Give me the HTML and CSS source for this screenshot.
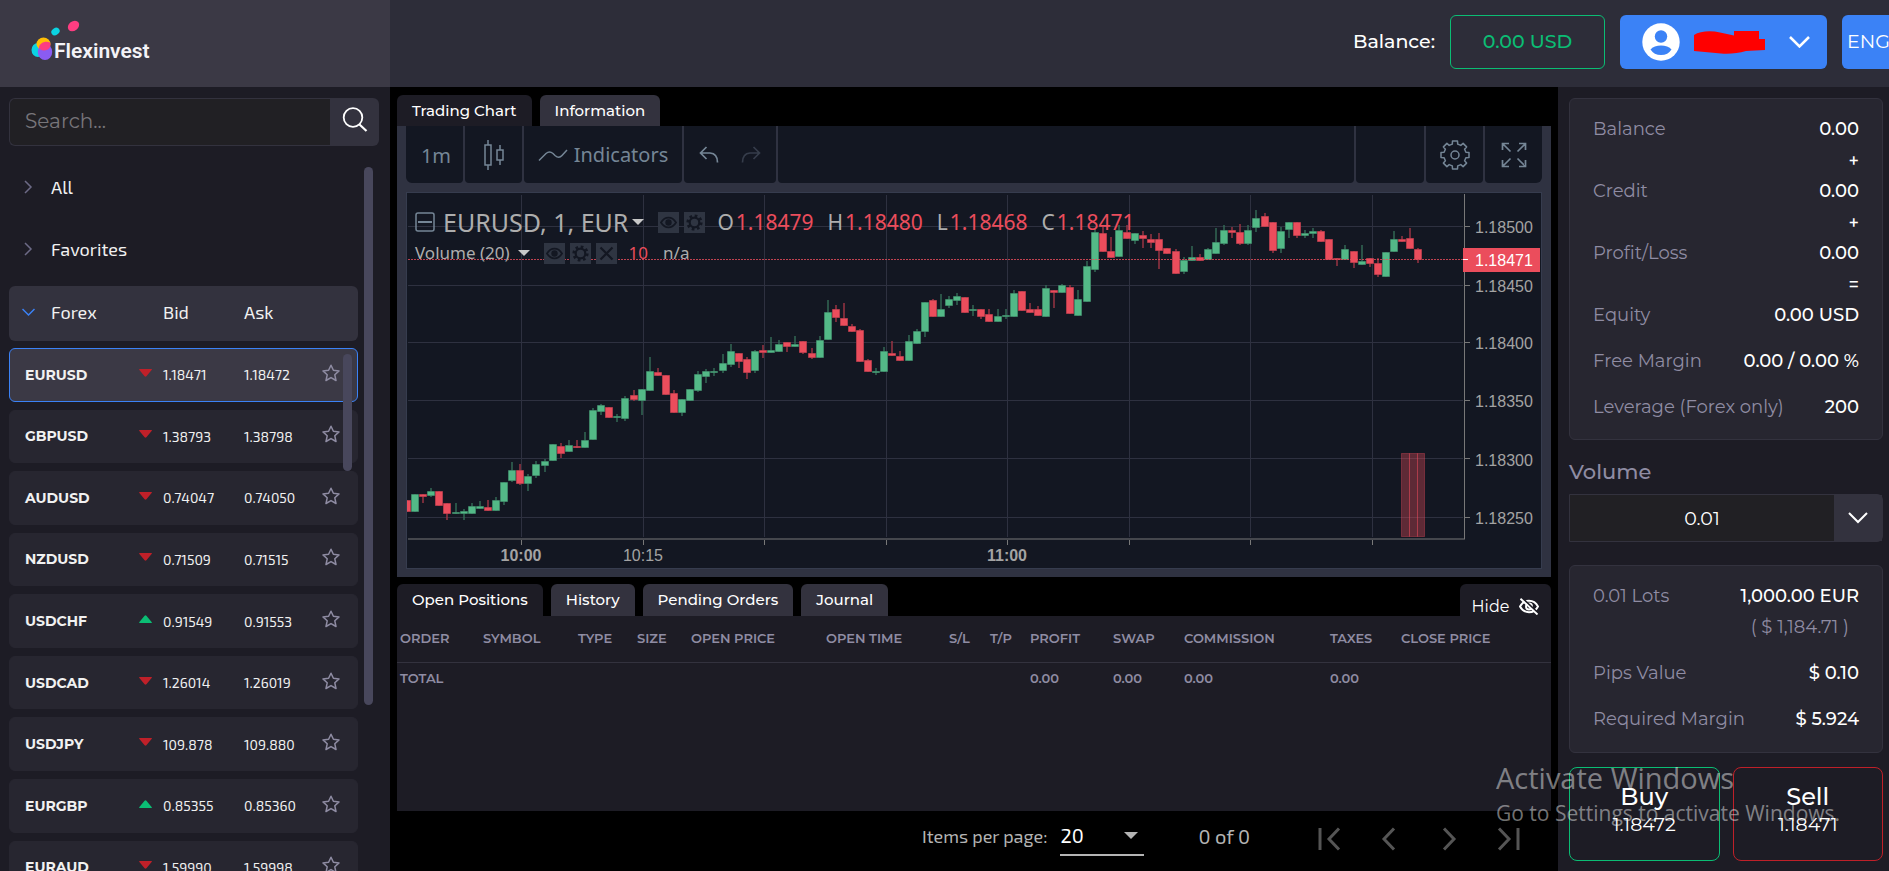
FILE: index.html
```html
<!DOCTYPE html>
<html lang="en">
<head>
<meta charset="utf-8">
<meta name="viewport" content="width=device-width, initial-scale=1">
<title>Flexinvest</title>
<link rel="stylesheet" href="styles.css">
</head>
<body>
<svg class="sprite" aria-hidden="true">
  <symbol id="star" viewBox="0 0 18 18"><path d="M9 1.200l2.400 5 5.600.700-4.200 3.900 1.200 5.700L9 13.600l-5 2.900 1.200-5.700L1 6.900l5.600-.700z" fill="none" stroke="currentColor" stroke-width="1.500" stroke-linejoin="round"/></symbol>
  <symbol id="down" viewBox="0 0 13 8"><path d="M.4 0h12.200q.6.4 0 1L7.400 7.300q-.9.700-1.800 0L.4 1q-.5-.6 0-1z" fill="#bf2029"/></symbol>
  <symbol id="up" viewBox="0 0 13 8"><path d="M.4 8h12.200q.6-.4 0-1L7.400.700q-.9-.700-1.800 0L.4 7q-.5.6 0 1z" fill="#0bbd74"/></symbol>
  <symbol id="eye" viewBox="0 0 21 21"><path d="M3 10.500C7 4 14 4 18 10.500C14 17 7 17 3 10.500z" fill="none" stroke="currentColor" stroke-width="1.800"/><circle cx="10.500" cy="10.500" r="3.200" fill="currentColor"/></symbol>
  <symbol id="cog" viewBox="0 0 21 21"><circle cx="10.500" cy="10.500" r="4.800" fill="none" stroke="currentColor" stroke-width="2.200"/><circle cx="10.500" cy="10.500" r="6.800" fill="none" stroke="currentColor" stroke-width="2.600" stroke-dasharray="2.670 2.670"/></symbol>
  <symbol id="cross" viewBox="0 0 21 21"><path d="M4.500 4.500l12 12M16.500 4.500l-12 12" stroke="currentColor" stroke-width="2.200"/></symbol>
</svg>

<div class="app">
  <header class="header">
    <a class="brand" href="#" aria-label="Flexinvest">
      <svg width="120" height="44" viewBox="30 18 120 44">
        <ellipse cx="38" cy="50" rx="6.500" ry="7" fill="#0bd3e2"/>
        <ellipse cx="43.500" cy="44" rx="7" ry="6.500" fill="#ffbe05"/>
        <ellipse cx="45" cy="52" rx="7.200" ry="8" fill="#8a5cf2"/>
        <path d="M39 47c1-4 6-6.500 11-4.500 1.500 4-1 8-6 8-3 0-4.500-1.500-5-3.500z" fill="#fd3d81"/>
        <ellipse cx="55.500" cy="31.500" rx="4.400" ry="3.500" transform="rotate(-35 55.500 31.500)" fill="#0bd3e2"/>
        <ellipse cx="73.500" cy="26" rx="6.200" ry="4.700" transform="rotate(-38 73.500 26)" fill="#fd3d81"/>
        <text x="54" y="58" class="brand-name">Flexinvest</text>
      </svg>
    </a>
    <div class="topbar">
      <span class="topbar-label">Balance:</span>
      <button class="balance-btn">0.00 USD</button>
      <button class="user-btn" aria-label="Account">
        <svg width="38" height="38" viewBox="0 0 38 38"><circle cx="19" cy="19" r="18.700" fill="#fff"/><circle cx="19" cy="13.500" r="6.200" fill="#3b82f6"/><path d="M8.500 26.500c4-5.500 17-5.500 21 0q-3.500 5.500-10.500 5.500t-10.500-5.500z" fill="#3b82f6"/></svg>
        <svg class="user-mask" width="71" height="23" viewBox="0 0 71 23"><path d="M0 4C6 0 17-.5 26 1.500l14 3V0h25v8h6v11l-19 1c-8 2.500-17 3-25 2.500L0 20z" fill="#f00"/></svg>
        <svg class="user-chevron" width="21" height="12" viewBox="0 0 21 12"><path d="M1 1l9.500 9.500L20 1" fill="none" stroke="#fff" stroke-width="2.500"/></svg>
      </button>
      <button class="lang-btn">ENG</button>
    </div>
  </header>

  <aside class="watchlist">
    <form class="search">
      <input class="search-input" type="text" placeholder="Search..." aria-label="Search">
      <button class="search-btn" type="button" aria-label="Search">
        <svg width="26" height="26" viewBox="0 0 26 26"><circle cx="11" cy="10.500" r="9.300" fill="none" stroke="#fff" stroke-width="1.800"/><path d="M17.500 17.500l7 6.500" stroke="#fff" stroke-width="2.200"/></svg>
      </button>
    </form>
    <div class="groups">
      <button class="group"><svg width="13" height="14" viewBox="0 0 13 14"><path d="M3 1l6 6-6 6" fill="none" stroke="#6c6a86" stroke-width="1.500"/></svg>All</button>
      <button class="group"><svg width="13" height="14" viewBox="0 0 13 14"><path d="M3 1l6 6-6 6" fill="none" stroke="#6c6a86" stroke-width="1.500"/></svg>Favorites</button>
      <div class="group-head">
        <button class="group-title"><svg width="13" height="14" viewBox="0 0 13 14"><path d="M.5 4l6 6 6-6" fill="none" stroke="#3b82f6" stroke-width="1.500"/></svg>Forex</button>
        <span>Bid</span><span>Ask</span>
      </div>
      <ul class="pairs">
        <li class="pair pair-active"><b>EURUSD</b><svg width="13" height="8"><use href="#down"/></svg><span>1.18471</span><span>1.18472</span><button class="fav" aria-label="Add EURUSD to favorites"><svg width="18" height="18"><use href="#star"/></svg></button></li>
        <li class="pair"><b>GBPUSD</b><svg width="13" height="8"><use href="#down"/></svg><span>1.38793</span><span>1.38798</span><button class="fav" aria-label="Add GBPUSD to favorites"><svg width="18" height="18"><use href="#star"/></svg></button></li>
        <li class="pair"><b>AUDUSD</b><svg width="13" height="8"><use href="#down"/></svg><span>0.74047</span><span>0.74050</span><button class="fav" aria-label="Add AUDUSD to favorites"><svg width="18" height="18"><use href="#star"/></svg></button></li>
        <li class="pair"><b>NZDUSD</b><svg width="13" height="8"><use href="#down"/></svg><span>0.71509</span><span>0.71515</span><button class="fav" aria-label="Add NZDUSD to favorites"><svg width="18" height="18"><use href="#star"/></svg></button></li>
        <li class="pair"><b>USDCHF</b><svg width="13" height="8"><use href="#up"/></svg><span>0.91549</span><span>0.91553</span><button class="fav" aria-label="Add USDCHF to favorites"><svg width="18" height="18"><use href="#star"/></svg></button></li>
        <li class="pair"><b>USDCAD</b><svg width="13" height="8"><use href="#down"/></svg><span>1.26014</span><span>1.26019</span><button class="fav" aria-label="Add USDCAD to favorites"><svg width="18" height="18"><use href="#star"/></svg></button></li>
        <li class="pair"><b>USDJPY</b><svg width="13" height="8"><use href="#down"/></svg><span>109.878</span><span>109.880</span><button class="fav" aria-label="Add USDJPY to favorites"><svg width="18" height="18"><use href="#star"/></svg></button></li>
        <li class="pair"><b>EURGBP</b><svg width="13" height="8"><use href="#up"/></svg><span>0.85355</span><span>0.85360</span><button class="fav" aria-label="Add EURGBP to favorites"><svg width="18" height="18"><use href="#star"/></svg></button></li>
        <li class="pair"><b>EURAUD</b><svg width="13" height="8"><use href="#down"/></svg><span>1.59990</span><span>1.59998</span><button class="fav" aria-label="Add EURAUD to favorites"><svg width="18" height="18"><use href="#star"/></svg></button></li>
      </ul>
      <i class="thumb thumb-inner"></i>
      <i class="thumb thumb-outer"></i>
    </div>
  </aside>

  <main class="center">
    <nav class="tabs">
      <button class="tab tab-active">Trading Chart</button>
      <button class="tab">Information</button>
    </nav>
    <section class="chart">
      <div class="toolbar">
        <button class="tool tool-period">1m</button>
        <button class="tool tool-icon" aria-label="Bar style"><svg width="20" height="30" viewBox="0 0 20 30" fill="none" stroke="currentColor" stroke-width="1.500"><path d="M1 5h6v20H1zM4 0v5M4 25v5M13 10h6v10h-6zM16 5v5M16 20v5"/></svg></button>
        <button class="tool tool-indicators"><svg width="30" height="14" viewBox="0 0 30 14" fill="none" stroke="currentColor" stroke-width="1.500"><path d="M1 12.500l7-7q3.500-3 7 0l2 2q4 3.500 7 0l5-5.500"/></svg>Indicators</button>
        <div class="tool tool-history">
          <button class="plain" aria-label="Undo"><svg width="20" height="18" viewBox="0 0 20 18" fill="none" stroke="currentColor" stroke-width="1.700"><path d="M7.500 1L1.500 7l6 6M1.500 7H11q7.500.5 7.500 9.500"/></svg></button>
          <button class="plain dim" aria-label="Redo"><svg width="20" height="18" viewBox="0 0 20 18" fill="none" stroke="currentColor" stroke-width="1.700"><path d="M12.500 1l6 6-6 6M18.500 7H9Q1.500 7.500 1.500 16.500"/></svg></button>
        </div>
        <div class="tool tool-fill"></div>
        <div class="tool tool-gap"></div>
        <button class="tool tool-icon" aria-label="Settings"><svg width="30" height="30" viewBox="0 0 30 30" fill="none" stroke="currentColor" stroke-width="1.500" stroke-linejoin="round"><path id="gear" d=""/><circle cx="15" cy="15" r="4"/></svg></button>
        <button class="tool tool-icon tool-last" aria-label="Fullscreen"><svg width="26" height="26" viewBox="0 0 26 26" fill="none" stroke="currentColor" stroke-width="1.700"><path d="M1.500 8V1.500H8M1.500 1.500L9.500 9.500M18 1.500h6.500V8M24.500 1.500l-8 8M1.500 18v6.500H8M1.500 24.500l8-8M18 24.500h6.500V18M24.500 24.500l-8-8"/></svg></button>
      </div>
      <div class="pane">
        <svg class="plot" id="plot" viewBox="0 0 1134 375" role="img" aria-label="EURUSD one minute chart">
          <path class="grid" d="M1 33.500h1055M1 92.500h1055M1 149.500h1055M1 207.500h1055M1 265.500h1055M1 324.500h1055M114.500 2v342M236.500 2v342M357.500 2v342M479.500 2v342M600.500 2v342M722.500 2v342M843.500 2v342M965.500 2v342"/>
          <g id="candles"></g>
          <g class="volume"><rect x="994.500" y="260.500" width="8" height="83"/><rect x="1002.500" y="260.500" width="8" height="83"/><rect x="1010.500" y="260.500" width="7" height="83"/></g>
          <path class="last" d="M1 66.500h1056"/>
          <path class="axis" d="M1057.500 1v345M1 346h1057M1058 33.500h5M1058 92.500h5M1058 149.500h5M1058 207.500h5M1058 265.500h5M1058 324.500h5M114.500 347v5M236.500 347v5M357.500 347v5M479.500 347v5M600.500 347v5M722.500 347v5M843.500 347v5M965.500 347v5"/>
          <rect x="1056" y="55" width="77" height="24" fill="#eb4d5c"/><path d="M1056 66.500h5" stroke="#fff"/>
          <g class="prices"><text x="1068" y="40">1.18500</text><text x="1068" y="99">1.18450</text><text x="1068" y="156">1.18400</text><text x="1068" y="214">1.18350</text><text x="1068" y="273">1.18300</text><text x="1068" y="331">1.18250</text><text x="1068" y="73" class="now">1.18471</text></g>
          <g class="times"><text x="114" y="368" class="strong">10:00</text><text x="236" y="368">10:15</text><text x="600" y="368" class="strong">11:00</text></g>
        </svg>
        <div class="legend">
          <div class="legend-row">
            <svg width="20" height="20" viewBox="0 0 20 20" fill="none" stroke="#758696" stroke-width="1.500"><rect x="1" y="1" width="18" height="18" rx="2"/><path d="M3 10h14" stroke-width="2"/></svg>
            <span class="legend-title">EURUSD, 1, EUR</span><i class="caret"></i>
            <span class="chips"><button class="chip" aria-label="Hide"><svg><use href="#eye"/></svg></button><button class="chip" aria-label="Settings"><svg><use href="#cog"/></svg></button></span>
            <span class="ohlc">O<em>1.18479</em></span><span class="ohlc">H<em>1.18480</em></span><span class="ohlc">L<em>1.18468</em></span><span class="ohlc">C<em>1.18471</em></span>
          </div>
          <div class="legend-row legend-sub">
            <span>Volume (20)</span><i class="caret"></i>
            <span class="chips"><button class="chip" aria-label="Hide"><svg><use href="#eye"/></svg></button><button class="chip" aria-label="Settings"><svg><use href="#cog"/></svg></button><button class="chip" aria-label="Remove"><svg><use href="#cross"/></svg></button></span>
            <em>10</em><span class="na">n/a</span>
          </div>
        </div>
      </div>
    </section>

    <nav class="tabs tabs-lower">
      <button class="tab tab-active">Open Positions</button>
      <button class="tab">History</button>
      <button class="tab">Pending Orders</button>
      <button class="tab">Journal</button>
      <button class="hide-btn">Hide <svg width="20" height="17" viewBox="0 0 20 17" fill="none" stroke="#fff" stroke-width="1.900"><path d="M1 8.500C5 .8 15 .8 19 8.500C15 16.200 5 16.200 1 8.500z"/><circle cx="10" cy="8.500" r="3"/><path d="M3 0l16 15" stroke="#1d1c25" stroke-width="2"/><path d="M1.500.8l17 15.700"/></svg></button>
    </nav>
    <section class="positions">
      <table>
        <thead><tr><th>ORDER</th><th>SYMBOL</th><th>TYPE</th><th>SIZE</th><th>OPEN PRICE</th><th>OPEN TIME</th><th>S/L</th><th>T/P</th><th>PROFIT</th><th>SWAP</th><th>COMMISSION</th><th>TAXES</th><th>CLOSE PRICE</th></tr></thead>
        <tbody><tr><td>TOTAL</td><td></td><td></td><td></td><td></td><td></td><td></td><td></td><td>0.00</td><td>0.00</td><td>0.00</td><td>0.00</td><td></td></tr></tbody>
      </table>
    </section>
    <footer class="pager">
      <label for="per-page">Items per page:</label>
      <span class="select-wrap"><select id="per-page"><option>20</option></select></span>
      <span class="range">0 of 0</span>
      <button class="page-btn" aria-label="First page"><svg viewBox="0 0 24 24"><path d="M3 1v22M22 1.500L12 12l10 10.500"/></svg></button>
      <button class="page-btn" aria-label="Previous page"><svg viewBox="0 0 24 24"><path d="M17 1.500L7 12l10 10.500"/></svg></button>
      <button class="page-btn" aria-label="Next page"><svg viewBox="0 0 24 24"><path d="M7 1.500L17 12 7 22.500"/></svg></button>
      <button class="page-btn" aria-label="Last page"><svg viewBox="0 0 24 24"><path d="M2 1.500L12 12 2 22.500M21 1v22"/></svg></button>
    </footer>
  </main>

  <aside class="ticket">
    <dl class="card account">
      <div><dt>Balance</dt><dd>0.00</dd></div>
      <div class="sign"><dd>+</dd></div>
      <div><dt>Credit</dt><dd>0.00</dd></div>
      <div class="sign"><dd>+</dd></div>
      <div><dt>Profit/Loss</dt><dd>0.00</dd></div>
      <div class="sign"><dd>=</dd></div>
      <div><dt>Equity</dt><dd>0.00 USD</dd></div>
      <div class="wide"><dt>Free Margin</dt><dd>0.00 / 0.00 %</dd></div>
      <div class="wide"><dt>Leverage (Forex only)</dt><dd>200</dd></div>
    </dl>
    <label class="volume-label" for="volume">Volume</label>
    <div class="volume-box">
      <input id="volume" type="text" value="0.01">
      <button aria-label="Choose volume"><svg width="20" height="12" viewBox="0 0 20 12"><path d="M1 1l9 9 9-9" fill="none" stroke="#fff" stroke-width="2"/></svg></button>
    </div>
    <dl class="card lots">
      <div><dt>0.01 Lots</dt><dd>1,000.00 EUR</dd></div>
      <div class="sign"><dd class="muted">( $ 1,184.71 )</dd></div>
      <div class="wide"><dt>Pips Value</dt><dd>$ 0.10</dd></div>
      <div class="wide"><dt>Required Margin</dt><dd>$ 5.924</dd></div>
    </dl>
    <div class="actions">
      <button class="trade buy"><strong>Buy</strong><span>1.18472</span></button>
      <button class="trade sell"><strong>Sell</strong><span>1.18471</span></button>
    </div>
  </aside>

  <div class="activation"><p>Activate Windows</p><p class="small">Go to Settings to activate Windows.</p></div>
</div>
<script src="chart.js"></script>
</body>
</html>
```
FILE: styles.css
```css
:root {
  --sans: Montserrat, Inter, "Open Sans", sans-serif;
  --narrow: "Exo 2", Roboto, sans-serif;
  --chart: "Noto Sans", "Open Sans", sans-serif;
  --panel: #1d1c25;
  --raised: #33323e;
  --muted: #8f8ca3;
  --blue: #3b82f6;
}
* { box-sizing: border-box; }
body { margin: 0; background: #000; color: #fff; font-family: var(--sans); }
button { font: inherit; color: inherit; background: none; border: 0; padding: 0; cursor: pointer; }
em { font-style: normal; }
svg { display: block; flex: none; }
.sprite { position: absolute; width: 0; height: 0; }

.app {
  position: relative;
  display: grid;
  grid-template: 87px minmax(0, 1fr) / 390px minmax(0, 1fr) 331px;
  height: 100vh;
  overflow: hidden;
}

.header { grid-column: 1 / -1; display: flex; background: #2d2d39; overflow: hidden; }
.brand { width: 390px; flex: none; background: #3b3945; padding: 18px 30px; }
.brand-name { font: 600 21px Roboto, sans-serif; fill: #f4f3f7; }
.topbar { flex: 1; display: flex; justify-content: flex-end; align-items: flex-start; padding: 15px 0; gap: 15px; font-size: 19px; line-height: 54px; font-weight: 500; }
.topbar button { height: 54px; border-radius: 6px; flex: none; }
.balance-btn { width: 155px; border: 1px solid #0bbd74; color: #0bbd74; line-height: 52px; }
.user-btn { width: 207px; background: var(--blue); display: flex; align-items: center; padding: 0 17px 0 22px; }
.user-mask { margin-left: 14px; }
.user-chevron { margin-left: auto; }
.lang-btn { width: 60px; margin-right: -13px; padding: 0 5px; background: var(--blue); text-align: left; font-weight: 400; }

.watchlist { background: var(--panel); padding: 11px 11px 0 9px; min-height: 0; display: flex; flex-direction: column; }
.search { display: flex; height: 48px; flex: none; }
.search-input { flex: 1; min-width: 0; background: #212024; border: 1px solid var(--raised); border-right: 0; border-radius: 6px 0 0 6px; padding: 0 15px 2px; font: 20px var(--sans); color: #fff; }
.search-input::placeholder { color: #77757a; }
.search-btn { width: 49px; background: var(--raised); border-radius: 0 6px 6px 0; display: grid; place-items: center; padding-bottom: 4px; }
.groups { position: relative; padding: 11px 21px 0 0; font: 18px var(--narrow); color: #f1f1f1; }
.group { display: flex; align-items: center; gap: 16px; width: 100%; height: 62px; padding: 0 13px 2px; text-align: left; }
.group-head { display: grid; grid-template-columns: 141px 81px 1fr; align-items: center; height: 55px; margin: 5px 0 7px; padding: 0 13px 3px; background: var(--raised); border-radius: 6px; }
.group-title { display: flex; align-items: center; gap: 16px; }
.pairs { list-style: none; margin: 0; padding: 0; height: 546px; display: flex; flex-direction: column; gap: 8px; }
.pair { flex: 1; display: grid; grid-template-columns: 114px 24px 81px 78px 18px; align-items: center; padding: 0 15px; border: 1px solid #272630; border-radius: 6px; background: #272630; font-size: 14px; }
.pair b { font: 700 14px var(--sans); }
.pair > svg { margin-bottom: 4px; }
.pair-active { background: #3b3945; border-color: var(--blue); }
.fav { color: #8f8ca3; padding-bottom: 4px; }
.thumb { position: absolute; width: 9px; border-radius: 5px; background: #48475c; }
.thumb-inner { top: 208px; right: 27px; height: 117px; }
.thumb-outer { top: 21px; right: 6px; height: 538px; }

.center { display: flex; flex-direction: column; min-width: 0; min-height: 0; padding: 8px 7px 0; background: #000; }
.tabs { display: flex; gap: 8px; height: 31px; font-size: 15px; font-weight: 500; }
.tab { padding: 0 15px; border-radius: 6px 6px 0 0; background: var(--raised); }
.tab-active { background: var(--panel); }
.chart { background: #2f3241; padding: 0 9px 8px; color: #758696; }
.toolbar { display: flex; gap: 2px; height: 57px; margin-bottom: 9px; }
.tool { display: flex; align-items: center; justify-content: center; background: #131722; border-radius: 0 0 4px 4px; font: 20px var(--chart); }
.tool-icon { width: 57px; }
.tool-period { width: 57px; padding: 2px 0 0 3px; border-bottom-left-radius: 6px; }
.tool-last { border-bottom-right-radius: 6px; }
.tool-indicators { width: 158px; gap: 6px; }
.tool-history { width: 92px; gap: 22px; }
.tool-fill { flex: 1; }
.tool-gap { width: 68px; }
.dim { color: #363d4b; }
.pane { position: relative; background: #131722; border: 1px solid #363c4e; }
.plot { width: 100%; height: auto; }
.grid { fill: none; stroke: #2e3140; }
.last { fill: none; stroke: #eb4d5c; stroke-dasharray: 2 1; opacity: .8; }
.axis { fill: none; stroke: #787878; stroke-width: 1; }
.volume rect { fill: #eb4d5c; fill-opacity: .35; stroke: #eb4d5c; stroke-opacity: .35; }
.prices, .times { font: 16px "Liberation Sans", Arial, sans-serif; fill: #a3a3a3; }
.times { text-anchor: middle; }
.now { fill: #fff; }
.strong { font-weight: 700; }
.up { fill: #53b987; stroke: #336854; }
.dn { fill: #eb4d5c; stroke: #9a3443; }
.legend { position: absolute; top: 11px; left: 8px; font: 21px/36px var(--chart); color: #adadad; white-space: nowrap; }
.legend em { color: #eb4d5c; }
.legend-row { display: flex; align-items: center; }
.legend-title { font-size: 25px; margin-left: 8px; }
.caret { width: 0; height: 0; margin-left: 4px; border: 6px solid transparent; border-top-color: #c8c8c8; border-bottom: 0; }
.chips { display: flex; gap: 5px; margin: 0 12px 0 14px; }
.chip { width: 21px; height: 21px; background: #2f3542; color: #131722; }
.chip svg { width: 21px; height: 21px; }
.ohlc { display: flex; gap: 2px; margin-right: 14px; }
.legend-sub { font-size: 17px; line-height: 26px; }
.legend-sub .caret { margin-left: 8px; }
.na { margin-left: 15px; }

.tabs-lower { margin-top: 7px; height: 32px; flex: none; }
.tabs-lower .tab { padding-bottom: 2px; }
.hide-btn { margin-left: auto; width: 91px; display: flex; align-items: center; justify-content: center; gap: 10px; padding-top: 12px; background: var(--panel); border-radius: 6px 6px 0 0; font-size: 16px; font-weight: 400; }
.positions { flex: 1; min-height: 0; background: var(--panel); }
.positions table { width: 100%; table-layout: fixed; border-collapse: collapse; color: var(--muted); font-size: 13px; text-align: left; white-space: nowrap; }
.positions th, .positions td { padding: 0 2px 0 3px; font-weight: 600; }
.positions th { height: 46px; padding-bottom: 2px; border-bottom: 1px solid var(--raised); }
.positions td { height: 32px; }
.positions th:nth-child(1), .positions th:nth-child(9) { width: 83px; }
.positions th:nth-child(2) { width: 95px; }
.positions th:nth-child(3) { width: 59px; }
.positions th:nth-child(4) { width: 54px; }
.positions th:nth-child(5) { width: 135px; }
.positions th:nth-child(6) { width: 123px; }
.positions th:nth-child(7) { width: 41px; }
.positions th:nth-child(8) { width: 40px; }
.positions th:nth-child(10), .positions th:nth-child(12) { width: 71px; }
.positions th:nth-child(11) { width: 146px; }
.pager { flex: none; height: 60px; display: flex; align-items: center; justify-content: flex-end; padding: 0 24px 10px 0; font: 18px var(--narrow); color: #b4b4b4; }
.select-wrap { position: relative; margin: 0 54px 0 13px; border-bottom: 2px solid #b4b4b4; }
.select-wrap::after { content: ""; position: absolute; right: 6px; top: 16px; border: 7px solid transparent; border-top-color: #b4b4b4; border-bottom: 0; pointer-events: none; }
.select-wrap select { appearance: none; width: 84px; height: 38px; border: 0; padding: 0; background: transparent; color: #fff; font: 20px var(--narrow); }
.range { margin-right: 49px; font-size: 20px; }
.page-btn { width: 60px; display: flex; justify-content: center; padding-top: 6px; }
.page-btn:last-child { margin-right: -12px; }
.page-btn svg { width: 24px; height: 24px; fill: none; stroke: #555; stroke-width: 3; }

.ticket { background: var(--panel); padding: 11px 6px 0 11px; display: flex; flex-direction: column; min-height: 0; }
.card { margin: 0; padding: 0 23px; background: #272630; border: 1px solid var(--raised); border-radius: 6px; font-size: 18px; }
.card div { display: flex; justify-content: space-between; align-items: center; height: 32px; }
.card .sign { height: 30px; justify-content: flex-end; }
.card .wide { height: 46px; }
.card dt { color: var(--muted); font-weight: 400; }
.card dd { margin: 0; font-weight: 500; }
.card .muted { color: var(--muted); font-weight: 400; margin-right: 10px; }
.account { padding-top: 14px; height: 342px; flex: none; }
.account .sign { padding-top: 2px; }
.account div:nth-child(7) { margin-bottom: 7px; }
.volume-label { margin: 18px 0 8px; font-size: 21px; line-height: 28px; font-weight: 500; color: var(--muted); }
.volume-box { display: flex; height: 48px; flex: none; border: 1px solid var(--raised); border-radius: 0 6px 6px 0; background: #212024; }
.volume-box input { flex: 1; min-width: 0; border: 0; background: none; color: #fff; text-align: center; font: 19px var(--sans); }
.volume-box button { width: 48px; background: var(--raised); display: grid; place-items: center; }
.lots { margin-top: 23px; padding-top: 14px; height: 188px; flex: none; }
.lots .sign { margin-bottom: 8px; }
.actions { display: flex; gap: 13px; margin-top: 14px; }
.trade { flex: 1; height: 94px; border: 1px solid; border-radius: 8px; display: flex; flex-direction: column; align-items: center; justify-content: center; padding-bottom: 8px; }
.trade strong { color: #fff; font-size: 24px; line-height: 30px; font-weight: 500; }
.trade span { color: #fff; font-size: 19px; line-height: 26px; }
.buy { border-color: #0bbd74; }
.sell { border-color: #bf2029; }

.activation { position: absolute; right: 51px; bottom: 42px; width: 342px; color: rgba(255, 255, 255, .45); font: 29px/38px "Open Sans", sans-serif; white-space: nowrap; pointer-events: none; }
.activation p { margin: 0; }
.activation .small { font-size: 21px; line-height: 32px; }
```
FILE: chart.js
```js
const NS = "http://www.w3.org/2000/svg";
const STEP = 8.09;

// Each bar: direction, body top, body bottom, wick top, wick bottom (thirds of a unit below base).
const series = [
  { base: 147, bars: "r480,516 g462,516 r462,471,,488 g453,467,444,470 r453,498 r489,521,,539 g516,521,489 g513,521,507,539 g498,521,489 g498,507,484 r502,513,480 g480,512,471 g426,486,,494 g390,423,366,426 r390,431,372,434 g408,431,402,453 g372,408,363,413 g363,377,358,396 g313,362 r318,341,309,354 g314,335,300 r318,323,300 g300,323,276 g210,299,205 g196,215,192,224 r201,233 g228,233,222,246 g174,237,169,242 r165,179,151,183 g147,182,,224 g93,152,51 r97,107,84 r106,165 r160,219,151 g178,219,,228 g147,182 g102,152,93,155 g93,111,87,129 g93,98,84,108 g70,93,42,98 g34,75,12,80 r39,66,,84 r57,98,52,117 g34,93,30,98 r30,39,16,54 g30,39,-8" },
  { base: -108, bars: "g777,800,765 r772,786,770,800 g777,786,753 r768,804,,808 r804,819,790,822 g765,819,754 g682,765,645 r673,700,660,710 r700,723,654 r723,741,717 r736,831,732 r826,861,821 g858,863,850,870 g799,860,786 r804,813,768 r813,827,799 g768,827,750 g737,777,732 g651,741,,755 r645,696,642 g673,696,627 g642,664,633,668 g633,647,624,660 r637,683 g673,678,660,692 r673,696,,701 r687,710,673 g692,710,673 g691,696,673,701 g624,696,615 r619,678 r673,683,655 r673,692,663 g610,696,600 r615,624,,669 g601,624,597 r606,687,601 g642,692,615 g543,651,528 g440,556,432,560 r444,502,426 r498,520,457 g435,516,420 r440,462,420 g444,467,,476 r449,462,439,489 r462,475,448,488 r462,497,444,552 r489,507 r498,566,492 g525,561,516,566 g516,529,483 r516,529,507 g493,525,489 g471,507,430 g435,476,421,480 r435,444,426,458 r440,476,417,480 g435,476,421,480 g399,430,376,440 r394,426,384 r412,498,,503 g439,493,426,503 g412,434,,458 r412,453,,458 g444,453,435,458 g439,448,430,458 r439,471,435 r462,525 r519,524,,542 g493,525,480 r498,534,,548 g529,539,480 r520,538,,546 r534,571,520,576 g502,575 g462,502,439 r462,470,453 r458,493,430 r493,525,489,534" }
];

const layer = document.getElementById("candles");
let index = 0;
for (const { base, bars } of series) {
  for (const bar of bars.split(" ")) {
    const y = bar.slice(1).split(",").map(v => v === "" ? null : base + v / 3);
    const x = Math.round(index * STEP);
    const top = Math.round(y[0]);
    const bottom = Math.round(y[1]);
    const group = document.createElementNS(NS, "g");
    group.setAttribute("class", bar[0] === "g" ? "up" : "dn");
    const wick = document.createElementNS(NS, "path");
    wick.setAttribute("d", `M${x} ${Math.round(y[2] ?? y[0])}V${Math.round(y[3] ?? y[1])}`);
    wick.setAttribute("stroke-width", "1.5");
    const body = document.createElementNS(NS, "rect");
    body.setAttribute("x", x - 3.5);
    body.setAttribute("y", top + 0.5);
    body.setAttribute("width", 7);
    body.setAttribute("height", Math.max(1, bottom - top - 1));
    body.setAttribute("stroke-opacity", "0.75");
    // Paint the fill over the inner half of the outline.
    body.setAttribute("paint-order", "stroke");
    group.append(wick, body);
    layer.append(group);
    index++;
  }
}

// Eight-tooth gear outline.
const points = [];
for (let i = 0; i < 8; i++) {
  for (const [radius, shift] of [[11.2, -14], [14.2, -10], [14.2, 10], [11.2, 14]]) {
    const a = (i * 45 + shift) * Math.PI / 180;
    points.push(`${(15 + radius * Math.cos(a)).toFixed(1)} ${(15 + radius * Math.sin(a)).toFixed(1)}`);
  }
}
document.getElementById("gear").setAttribute("d", "M" + points.join("L") + "Z");
```
